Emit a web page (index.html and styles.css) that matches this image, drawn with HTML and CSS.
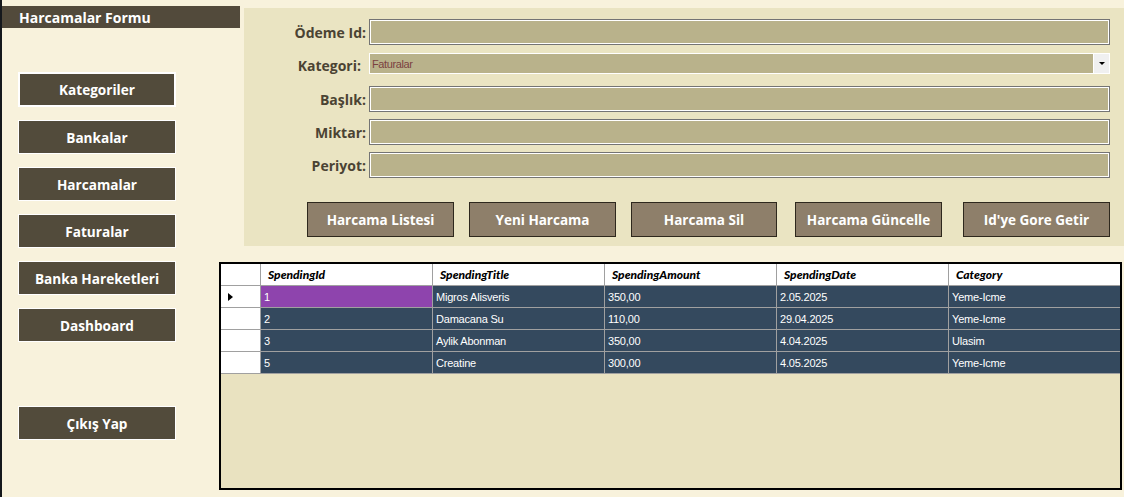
FILE: index.html
```html
<!DOCTYPE html>
<html lang="tr">
<head>
<meta charset="utf-8">
<title>Harcamalar Formu</title>
<link rel="stylesheet" href="styles.css">
</head>
<body>
<div class="window">
  <aside class="sidebar">
    <div class="title-bar">Harcamalar Formu</div>
    <nav class="nav">
      <div class="nav-btn focused">Kategoriler</div>
      <div class="nav-btn">Bankalar</div>
      <div class="nav-btn">Harcamalar</div>
      <div class="nav-btn">Faturalar</div>
      <div class="nav-btn">Banka Hareketleri</div>
      <div class="nav-btn">Dashboard</div>
      <div class="nav-btn exit">Çıkış Yap</div>
    </nav>
  </aside>
  <main class="main">
    <section class="panel">
      <div class="form">
        <label class="lbl">Ödeme Id:</label>
        <div class="input"></div>
        <label class="lbl lbl-combo">Kategori:</label>
        <div class="combo-cell">
          <div class="combo">
            <span class="combo-text">Faturalar</span>
            <span class="combo-btn"><span class="tri"></span></span>
          </div>
        </div>
        <label class="lbl">Başlık:</label>
        <div class="input"></div>
        <label class="lbl">Miktar:</label>
        <div class="input"></div>
        <label class="lbl">Periyot:</label>
        <div class="input"></div>
      </div>
      <div class="actions">
        <div class="act-btn">Harcama Listesi</div>
        <div class="act-btn">Yeni Harcama</div>
        <div class="act-btn">Harcama Sil</div>
        <div class="act-btn g4">Harcama Güncelle</div>
        <div class="act-btn g5">Id'ye Gore Getir</div>
      </div>
    </section>
    <section class="grid">
      <table class="dgv">
        <colgroup>
          <col class="c-rh"><col class="c"><col class="c"><col class="c"><col class="c"><col class="c">
        </colgroup>
        <thead>
          <tr>
            <th class="rh"></th>
            <th>SpendingId</th>
            <th>SpendingTitle</th>
            <th>SpendingAmount</th>
            <th>SpendingDate</th>
            <th>Category</th>
          </tr>
        </thead>
        <tbody>
          <tr>
            <td class="rh"><span class="cur"></span></td>
            <td class="sel">1</td>
            <td>Migros Alisveris</td>
            <td>350,00</td>
            <td>2.05.2025</td>
            <td>Yeme-Icme</td>
          </tr>
          <tr>
            <td class="rh"></td>
            <td>2</td>
            <td>Damacana Su</td>
            <td>110,00</td>
            <td>29.04.2025</td>
            <td>Yeme-Icme</td>
          </tr>
          <tr>
            <td class="rh"></td>
            <td>3</td>
            <td>Aylik Abonman</td>
            <td>350,00</td>
            <td>4.04.2025</td>
            <td>Ulasim</td>
          </tr>
          <tr>
            <td class="rh"></td>
            <td>5</td>
            <td>Creatine</td>
            <td>300,00</td>
            <td>4.05.2025</td>
            <td>Yeme-Icme</td>
          </tr>
        </tbody>
      </table>
    </section>
  </main>
</div>
</body>
</html>
```

FILE: styles.css
```css
* { box-sizing: border-box; }
html, body { margin: 0; padding: 0; }
body {
  width: 1124px;
  height: 497px;
  overflow: hidden;
  background: #f8f2dc;
  font-family: "Open Sans", "Liberation Sans", sans-serif;
}
.window {
  display: flex;
  height: 497px;
  border-left: 2px solid #15181c;
}
.sidebar {
  width: 217px;
  flex: none;
  padding-top: 6px;
}
.title-bar {
  width: 238px;
  height: 22px;
  background: #524a3b;
  color: #fff;
  font-weight: 700;
  font-size: 14px;
  line-height: 23px;
  padding-left: 17px;
  position: relative;
  z-index: 1;
}
.nav {
  display: flex;
  flex-direction: column;
  gap: 13px;
  margin-top: 44px;
  padding-left: 16px;
}
.nav-btn {
  width: 158px;
  height: 34px;
  background: #524b3b;
  border: 1px solid #ffffff;
  color: #fff;
  font-weight: 700;
  font-size: 13.6px;
  display: flex;
  align-items: center;
  justify-content: center;
}
.nav-btn.focused { border-width: 2px; height: 35px; }
.nav-btn.exit { margin-top: 51px; }

.main {
  flex: 1;
  display: flex;
  flex-direction: column;
}
.panel {
  margin-top: 8px;
  margin-left: 25px;
  height: 238px;
  background: #eae4c2;
  padding-top: 11px;
}
.form {
  display: grid;
  grid-template-columns: 122px 741px;
  grid-template-rows: 26px 27px 26px 26px 26px;
  row-gap: 7px;
  column-gap: 3px;
}
.lbl {
  display: flex;
  align-items: center;
  justify-content: flex-end;
  font-weight: 700;
  font-size: 14px;
  color: #4b4333;
}
.lbl.lbl-combo { padding-right: 5px; }
.input {
  background: #b9b28b;
  border: 1px solid #747474;
  box-shadow: inset 0 0 0 1px #ffffff;
}
.combo-cell { padding-top: 1px; }
.combo {
  height: 21px;
  background: #b9b28b;
  border: 1px solid #ffffff;
  display: flex;
  align-items: center;
}
.combo-text {
  flex: 1;
  font-family: "Liberation Sans", sans-serif;
  font-size: 11px;
  letter-spacing: -0.4px;
  color: #7b4141;
  padding-left: 2px;
}
.combo-btn {
  width: 16px;
  height: 19px;
  background: #f0f0f0;
  border-left: 1px solid #ffffff;
  display: flex;
  align-items: center;
  justify-content: center;
}
.tri {
  width: 0;
  height: 0;
  border-left: 3px solid transparent;
  border-right: 3px solid transparent;
  border-top: 3px solid #000;
}
.actions {
  display: flex;
  gap: 15px;
  margin-top: 24px;
  padding-left: 63px;
}
.act-btn {
  width: 147px;
  height: 35px;
  background: #8e7f6a;
  border: 1px solid #2e281d;
  color: #fff;
  font-weight: 700;
  font-size: 13.5px;
  display: flex;
  align-items: center;
  justify-content: center;
}
.act-btn:nth-child(3) { width: 146px; }
.act-btn.g4 { margin-left: 3px; }
.act-btn.g5 { margin-left: 6px; }

.grid {
  margin-top: 16px;
  width: 903px;
  height: 228px;
  background: #e9e2c0;
  border: 2px solid #000;
  overflow: hidden;
}
.dgv {
  border-collapse: collapse;
  table-layout: fixed;
  width: 900px;
  margin-left: -1px;
  margin-top: -1px;
}
.c-rh { width: 40px; }
.c { width: 172px; }
.dgv th, .dgv td {
  border: 1px solid #a0a0a0;
  height: 22px;
  padding: 0 0 0 3px;
  text-align: left;
  white-space: nowrap;
  overflow: hidden;
}
.dgv th {
  background: #ffffff;
  font-family: "Lato", "Liberation Sans", sans-serif;
  font-style: italic;
  font-weight: 900;
  font-size: 12px;
  color: #000;
  padding-left: 7px;
  border-top-color: #ffffff;
}
.dgv td {
  background: #34495e;
  color: #fff;
  font-family: "Liberation Sans", sans-serif;
  font-size: 11px;
  letter-spacing: -0.2px;
}
.dgv td.sel { background: #8e44ad; }
.dgv .rh {
  background: #ffffff;
  padding: 0;
}
.cur {
  display: block;
  width: 0;
  height: 0;
  margin-left: 7px;
  border-top: 4px solid transparent;
  border-bottom: 4px solid transparent;
  border-left: 5px solid #000;
}
```
